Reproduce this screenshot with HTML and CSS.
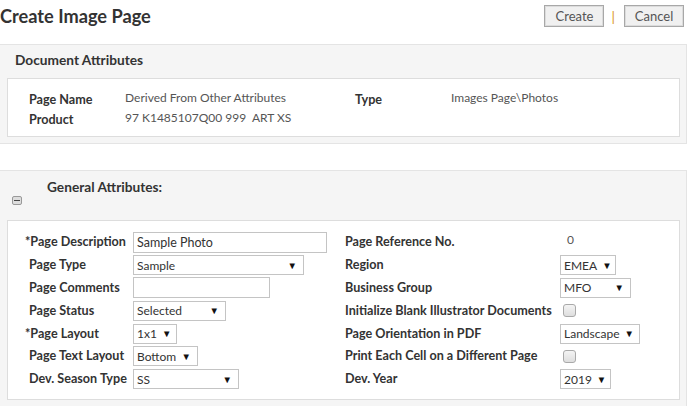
FILE: index.html
```html
<!DOCTYPE html>
<html>
<head>
<meta charset="utf-8">
<link rel="stylesheet" href="styles.css">
</head>
<body>
<div class="header">
  <h1 class="title">Create Image Page</h1>
  <div class="actions">
    <button class="btn">Create</button>
    <span class="sep">|</span>
    <button class="btn">Cancel</button>
  </div>
</div>

<section class="panel doc-panel">
  <h2 class="panel-title">Document Attributes</h2>
  <div class="box doc-box">
    <div class="lbl">Page Name</div>
    <div class="val">Derived From Other Attributes</div>
    <div class="lbl">Type</div>
    <div class="val">Images Page\Photos</div>
    <div class="lbl">Product</div>
    <div class="val">97 K1485107Q00 999&nbsp; ART XS</div>
    <div></div><div></div>
  </div>
</section>

<section class="panel gen-panel">
  <h2 class="panel-title gen-title">General Attributes:</h2>
  <div class="collapse"><span class="minus"></span></div>
  <div class="box gen-box">
    <div class="flbl"><span class="req">*</span>Page Description</div>
    <div class="ctl"><div class="input w194">Sample Photo</div></div>
    <div class="flbl">Page Reference No.</div>
    <div class="ctl"><span class="refno">0</span></div>

    <div class="flbl">Page Type</div>
    <div class="ctl"><div class="select w171"><span>Sample</span><span class="arrow">▼</span></div></div>
    <div class="flbl">Region</div>
    <div class="ctl"><div class="select w56"><span>EMEA</span><span class="arrow">▼</span></div></div>

    <div class="flbl">Page Comments</div>
    <div class="ctl"><div class="input w137"></div></div>
    <div class="flbl">Business Group</div>
    <div class="ctl"><div class="select w71"><span>MFO</span><span class="arrow">▼</span></div></div>

    <div class="flbl">Page Status</div>
    <div class="ctl"><div class="select w93"><span>Selected</span><span class="arrow">▼</span></div></div>
    <div class="flbl">Initialize Blank Illustrator Documents</div>
    <div class="ctl"><span class="check"></span></div>

    <div class="flbl"><span class="req">*</span>Page Layout</div>
    <div class="ctl"><div class="select w44"><span>1x1</span><span class="arrow">▼</span></div></div>
    <div class="flbl">Page Orientation in PDF</div>
    <div class="ctl"><div class="select w80"><span>Landscape</span><span class="arrow">▼</span></div></div>

    <div class="flbl">Page Text Layout</div>
    <div class="ctl"><div class="select w65"><span>Bottom</span><span class="arrow">▼</span></div></div>
    <div class="flbl">Print Each Cell on a Different Page</div>
    <div class="ctl"><span class="check"></span></div>

    <div class="flbl">Dev. Season Type</div>
    <div class="ctl"><div class="select w106"><span>SS</span><span class="arrow">▼</span></div></div>
    <div class="flbl">Dev. Year</div>
    <div class="ctl"><div class="select w51"><span>2019</span><span class="arrow">▼</span></div></div>
  </div>
</section>
</body>
</html>
```

FILE: styles.css
```css
* { box-sizing: border-box; }
html, body { margin: 0; padding: 0; background: #fff; }
body {
  font-family: Lato, "Open Sans", sans-serif;
  font-size: 12px;
  color: #333;
  width: 690px;
}

.header {
  display: flex;
  justify-content: space-between;
  align-items: center;
  height: 44px;
  padding: 0 6px 12px 0;
}
.title {
  margin: 0;
  font-size: 18.2px;
  font-weight: bold;
  color: #333;
}
.actions { display: flex; align-items: center; }
.btn {
  font-family: inherit;
  font-size: 13px;
  color: #555;
  background: #f0f0f0;
  border: 1px solid #a8a8a8;
  box-shadow: inset 0 0 0 1px #dcdcdc;
  width: 60px;
  height: 22px;
  padding: 0;
}
.sep {
  color: #d9951e;
  font-size: 14px;
  margin: 0 9px 0 7px;
}

.panel {
  width: 687px;
  background: #f5f5f5;
  border: 1px solid #e4e4e4;
  border-left: none;
  padding: 0 6px 0 7px;
}
.panel-title {
  margin: 0;
  font-size: 13.7px;
  font-weight: bold;
  color: #333;
  padding: 6px 0 0 8px;
  height: 33px;
}
.box {
  background: #fff;
  border: 1px solid #ddd;
}

.doc-panel { padding-bottom: 6px; }
.doc-box {
  display: grid;
  grid-template-columns: 96px 230px 96px 1fr;
  grid-auto-rows: 20px;
  align-items: center;
  padding: 10px 0 7px 21px;
}
.lbl { font-weight: bold; color: #333; font-size: 12.6px; }
.val { color: #555; margin-top: -4px; }

.gen-panel {
  margin-top: 26px;
  padding-bottom: 6px;
}
.gen-title {
  padding: 7px 0 0 40px;
  height: 25px;
}
.collapse {
  width: 10px;
  height: 9px;
  margin: 0 0 15px 5px;
  border: 1px solid #999;
  border-radius: 2px;
  background: #ddd;
  display: flex;
  align-items: center;
  justify-content: center;
}
.minus { width: 6px; height: 1px; background: #444; }

.gen-box {
  display: grid;
  grid-template-columns: 104px 212px 215px 1fr;
  grid-auto-rows: 22.8px;
  align-items: center;
  padding: 10px 0 8px 21px;
}
.flbl { font-weight: bold; color: #333; white-space: nowrap; font-size: 12.6px; margin-top: -1px; }
.req { margin-left: -4px; }
.ctl { display: flex; align-items: center; }
.input, .select {
  height: 21px;
  border: 1px solid #c4c4c4;
  background: #fff;
  color: #333;
  font-size: 12.5px;
  padding: 0 3px;
  display: flex;
  align-items: center;
}
.select { justify-content: space-between; padding-right: 6px; height: 20px; font-size: 12px; }
.arrow { font-size: 9.5px; color: #111; margin-left: 5px; }
.refno { color: #555; margin-left: 7px; margin-top: -6px; }
.check {
  width: 13px;
  height: 13px;
  margin-left: 3px;
  border: 1px solid #a9a9a9;
  border-radius: 3px;
  background: linear-gradient(#f4f4f4, #dedede);
}
.w194 { width: 194px; }
.w171 { width: 171px; }
.w137 { width: 137px; }
.w93 { width: 93px; }
.w44 { width: 44px; }
.w65 { width: 65px; }
.w106 { width: 106px; }
.w56 { width: 56px; }
.w71 { width: 71px; }
.w80 { width: 80px; }
.w51 { width: 51px; }
```
